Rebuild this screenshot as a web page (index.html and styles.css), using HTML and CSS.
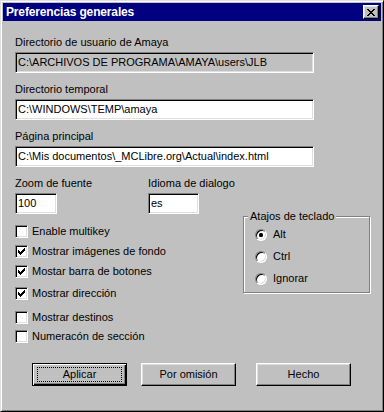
FILE: index.html
```html
<!DOCTYPE html>
<html lang="es">
<head>
<meta charset="utf-8">
<title>Preferencias generales</title>
<link rel="stylesheet" href="styles.css">
</head>
<body>
<div class="window">
  <div class="titlebar">
    <span class="title">Preferencias generales</span>
    <span class="close-btn">
      <svg width="8" height="7" viewBox="0 0 8 7" shape-rendering="crispEdges"><path d="M0 0h2v1h-2z M6 0h2v1h-2z M1 1h2v1h-2z M5 1h2v1h-2z M2 2h4v1h-4z M3 3h2v1h-2z M2 4h4v1h-4z M1 5h2v1h-2z M5 5h2v1h-2z M0 6h2v1h-2z M6 6h2v1h-2z" fill="#000"/></svg>
    </span>
  </div>
  <div class="content">
    <div class="field-group">
      <div class="label">Directorio de usuario de Amaya</div>
      <div class="input wide disabled">C:\ARCHIVOS DE PROGRAMA\AMAYA\users\JLB</div>
    </div>
    <div class="field-group">
      <div class="label">Directorio temporal</div>
      <div class="input wide">C:\WINDOWS\TEMP\amaya</div>
    </div>
    <div class="field-group">
      <div class="label">Página principal</div>
      <div class="input wide">C:\Mis documentos\_MCLibre.org\Actual\index.html</div>
    </div>

    <div class="lower">
      <div class="left-col">
        <div class="small-fields">
          <div class="small-group zoom-group">
            <div class="label">Zoom de fuente</div>
            <div class="input zoom">100</div>
          </div>
          <div class="small-group">
            <div class="label">Idioma de dialogo</div>
            <div class="input lang">es</div>
          </div>
        </div>
        <div class="checks">
          <div class="check-row r1"><span class="checkbox"></span><span class="check-label">Enable multikey</span></div>
          <div class="check-row r2"><span class="checkbox"><svg width="7" height="7" viewBox="0 0 7 7" shape-rendering="crispEdges"><path d="M0 2h1v3h-1z M1 3h1v3h-1z M2 4h1v3h-1z M3 3h1v3h-1z M4 2h1v3h-1z M5 1h1v3h-1z M6 0h1v3h-1z" fill="#000"/></svg></span><span class="check-label">Mostrar imágenes de fondo</span></div>
          <div class="check-row r3"><span class="checkbox"><svg width="7" height="7" viewBox="0 0 7 7" shape-rendering="crispEdges"><path d="M0 2h1v3h-1z M1 3h1v3h-1z M2 4h1v3h-1z M3 3h1v3h-1z M4 2h1v3h-1z M5 1h1v3h-1z M6 0h1v3h-1z" fill="#000"/></svg></span><span class="check-label">Mostar barra de botones</span></div>
          <div class="check-row r4"><span class="checkbox"><svg width="7" height="7" viewBox="0 0 7 7" shape-rendering="crispEdges"><path d="M0 2h1v3h-1z M1 3h1v3h-1z M2 4h1v3h-1z M3 3h1v3h-1z M4 2h1v3h-1z M5 1h1v3h-1z M6 0h1v3h-1z" fill="#000"/></svg></span><span class="check-label">Mostrar dirección</span></div>
          <div class="check-row r5"><span class="checkbox"></span><span class="check-label">Mostrar destinos</span></div>
          <div class="check-row r6"><span class="checkbox"></span><span class="check-label">Numeracón de sección</span></div>
        </div>
      </div>
      <fieldset class="group">
        <legend>Atajos de teclado</legend>
        <div class="radio-row"><span class="radio checked"><span class="dot"></span></span><span class="radio-label">Alt</span></div>
        <div class="radio-row"><span class="radio"></span><span class="radio-label">Ctrl</span></div>
        <div class="radio-row"><span class="radio"></span><span class="radio-label">Ignorar</span></div>
      </fieldset>
    </div>

    <div class="buttons">
      <div class="btn default b1"><span class="focus">Aplicar</span></div>
      <div class="btn b2"><span class="btn-text">Por omisión</span></div>
      <div class="btn b3"><span class="btn-text">Hecho</span></div>
    </div>
  </div>
</div>
</body>
</html>
```
FILE: styles.css
```css
html, body {
  margin: 0;
  padding: 0;
  background: #c0c0c0;
}

.window {
  width: 384px;
  height: 412px;
  box-sizing: border-box;
  background: #c0c0c0;
  border: 1px solid;
  border-color: #dfdfdf #000 #000 #dfdfdf;
  box-shadow: inset 1px 1px 0 #fff, inset -1px -1px 0 #808080;
  padding: 2px;
  display: flex;
  flex-direction: column;
  font-family: "Liberation Sans", Arial, sans-serif;
  font-size: 11px;
  line-height: 13px;
  color: #000;
}

.titlebar {
  height: 18px;
  flex: none;
  background: #000080;
  display: flex;
  align-items: center;
  padding: 0 2px 0 3px;
}

.title {
  color: #fff;
  font-weight: bold;
  font-size: 12px;
  line-height: 14px;
  letter-spacing: -0.15px;
}

.close-btn {
  margin-left: auto;
  width: 16px;
  height: 14px;
  box-sizing: border-box;
  background: #c0c0c0;
  border: 1px solid;
  border-color: #fff #000 #000 #fff;
  box-shadow: inset -1px -1px 0 #808080, inset 1px 1px 0 #dfdfdf;
  display: flex;
  align-items: center;
  justify-content: center;
  padding-right: 1px;
}

.close-btn svg {
  display: block;
}

.content {
  padding: 15px 11px 0 12px;
  flex: 1;
}

.label {
  white-space: nowrap;
}

.field-group {
  margin-bottom: 10px;
}

.input {
  margin-top: 3px;
  height: 21px;
  box-sizing: border-box;
  background: #fff;
  border: 1px solid;
  border-color: #808080 #fff #fff #808080;
  box-shadow: inset 1px 1px 0 #000, inset -1px -1px 0 #dfdfdf;
  padding: 0 2px;
  line-height: 19px;
  white-space: nowrap;
  overflow: hidden;
}

.input.wide {
  width: 299px;
}

.input.disabled {
  background: #c0c0c0;
}

.input.zoom {
  width: 42px;
}

.input.lang {
  width: 51px;
}

.lower {
  margin-top: 4px;
  display: flex;
  align-items: flex-start;
}

.left-col {
  flex: none;
}

.small-fields {
  display: flex;
}

.zoom-group {
  width: 133px;
}

.checks {
  margin-top: 11px;
}

.check-row {
  display: flex;
  align-items: center;
  height: 13px;
}

.check-row.r2,
.check-row.r3 {
  margin-top: 7px;
}

.check-row.r4 {
  margin-top: 9px;
}

.check-row.r5 {
  margin-top: 11px;
}

.check-row.r6 {
  margin-top: 6px;
}

.checkbox {
  width: 13px;
  height: 13px;
  box-sizing: border-box;
  flex: none;
  background: #fff;
  border: 1px solid;
  border-color: #808080 #fff #fff #808080;
  box-shadow: inset 1px 1px 0 #000, inset -1px -1px 0 #dfdfdf;
  padding: 2px;
}

.checkbox svg {
  display: block;
}

.check-label {
  margin-left: 4px;
  white-space: nowrap;
}

.group {
  margin: 33px 0 0 auto;
  width: 127px;
  box-sizing: border-box;
  border: 1px solid #808080;
  box-shadow: 1px 1px 0 #fff, inset 1px 1px 0 #fff;
  padding: 5px 0 7px 11px;
  min-inline-size: 0;
}

.group legend {
  padding: 0 2px;
  margin-left: -7px;
  line-height: 13px;
  background: #c0c0c0;
}

.radio-row {
  display: flex;
  align-items: center;
  height: 13px;
}

.radio-row + .radio-row {
  margin-top: 9px;
}

.radio {
  width: 12px;
  height: 12px;
  box-sizing: border-box;
  flex: none;
  border-radius: 50%;
  background: #fff;
  border: 1px solid;
  border-color: #808080 #fff #fff #808080;
  box-shadow: inset 1px 1px 0 #000, inset -1px -1px 0 #dfdfdf;
  display: flex;
  align-items: center;
  justify-content: center;
}

.dot {
  width: 4px;
  height: 4px;
  border-radius: 1.5px;
  background: #000;
}

.radio-label {
  margin-left: 6px;
}

.buttons {
  margin-top: 20px;
  display: flex;
}

.btn {
  width: 95px;
  height: 23px;
  box-sizing: border-box;
  background: #c0c0c0;
  border: 1px solid;
  border-color: #fff #000 #000 #fff;
  box-shadow: inset -1px -1px 0 #808080, inset 1px 1px 0 #dfdfdf;
  display: flex;
  align-items: center;
  justify-content: center;
}

.btn.default {
  border-color: #000;
  box-shadow: inset 1px 1px 0 #fff, inset -1px -1px 0 #000, inset -2px -2px 0 #808080;
  padding: 3px 4px;
}

.focus {
  flex: 1;
  align-self: stretch;
  border: 1px dotted #000;
  display: flex;
  align-items: center;
  justify-content: center;
}

.b1 {
  margin-left: 17px;
}

.b2 {
  margin-left: 14px;
}

.b3 {
  margin-left: 20px;
}
```
